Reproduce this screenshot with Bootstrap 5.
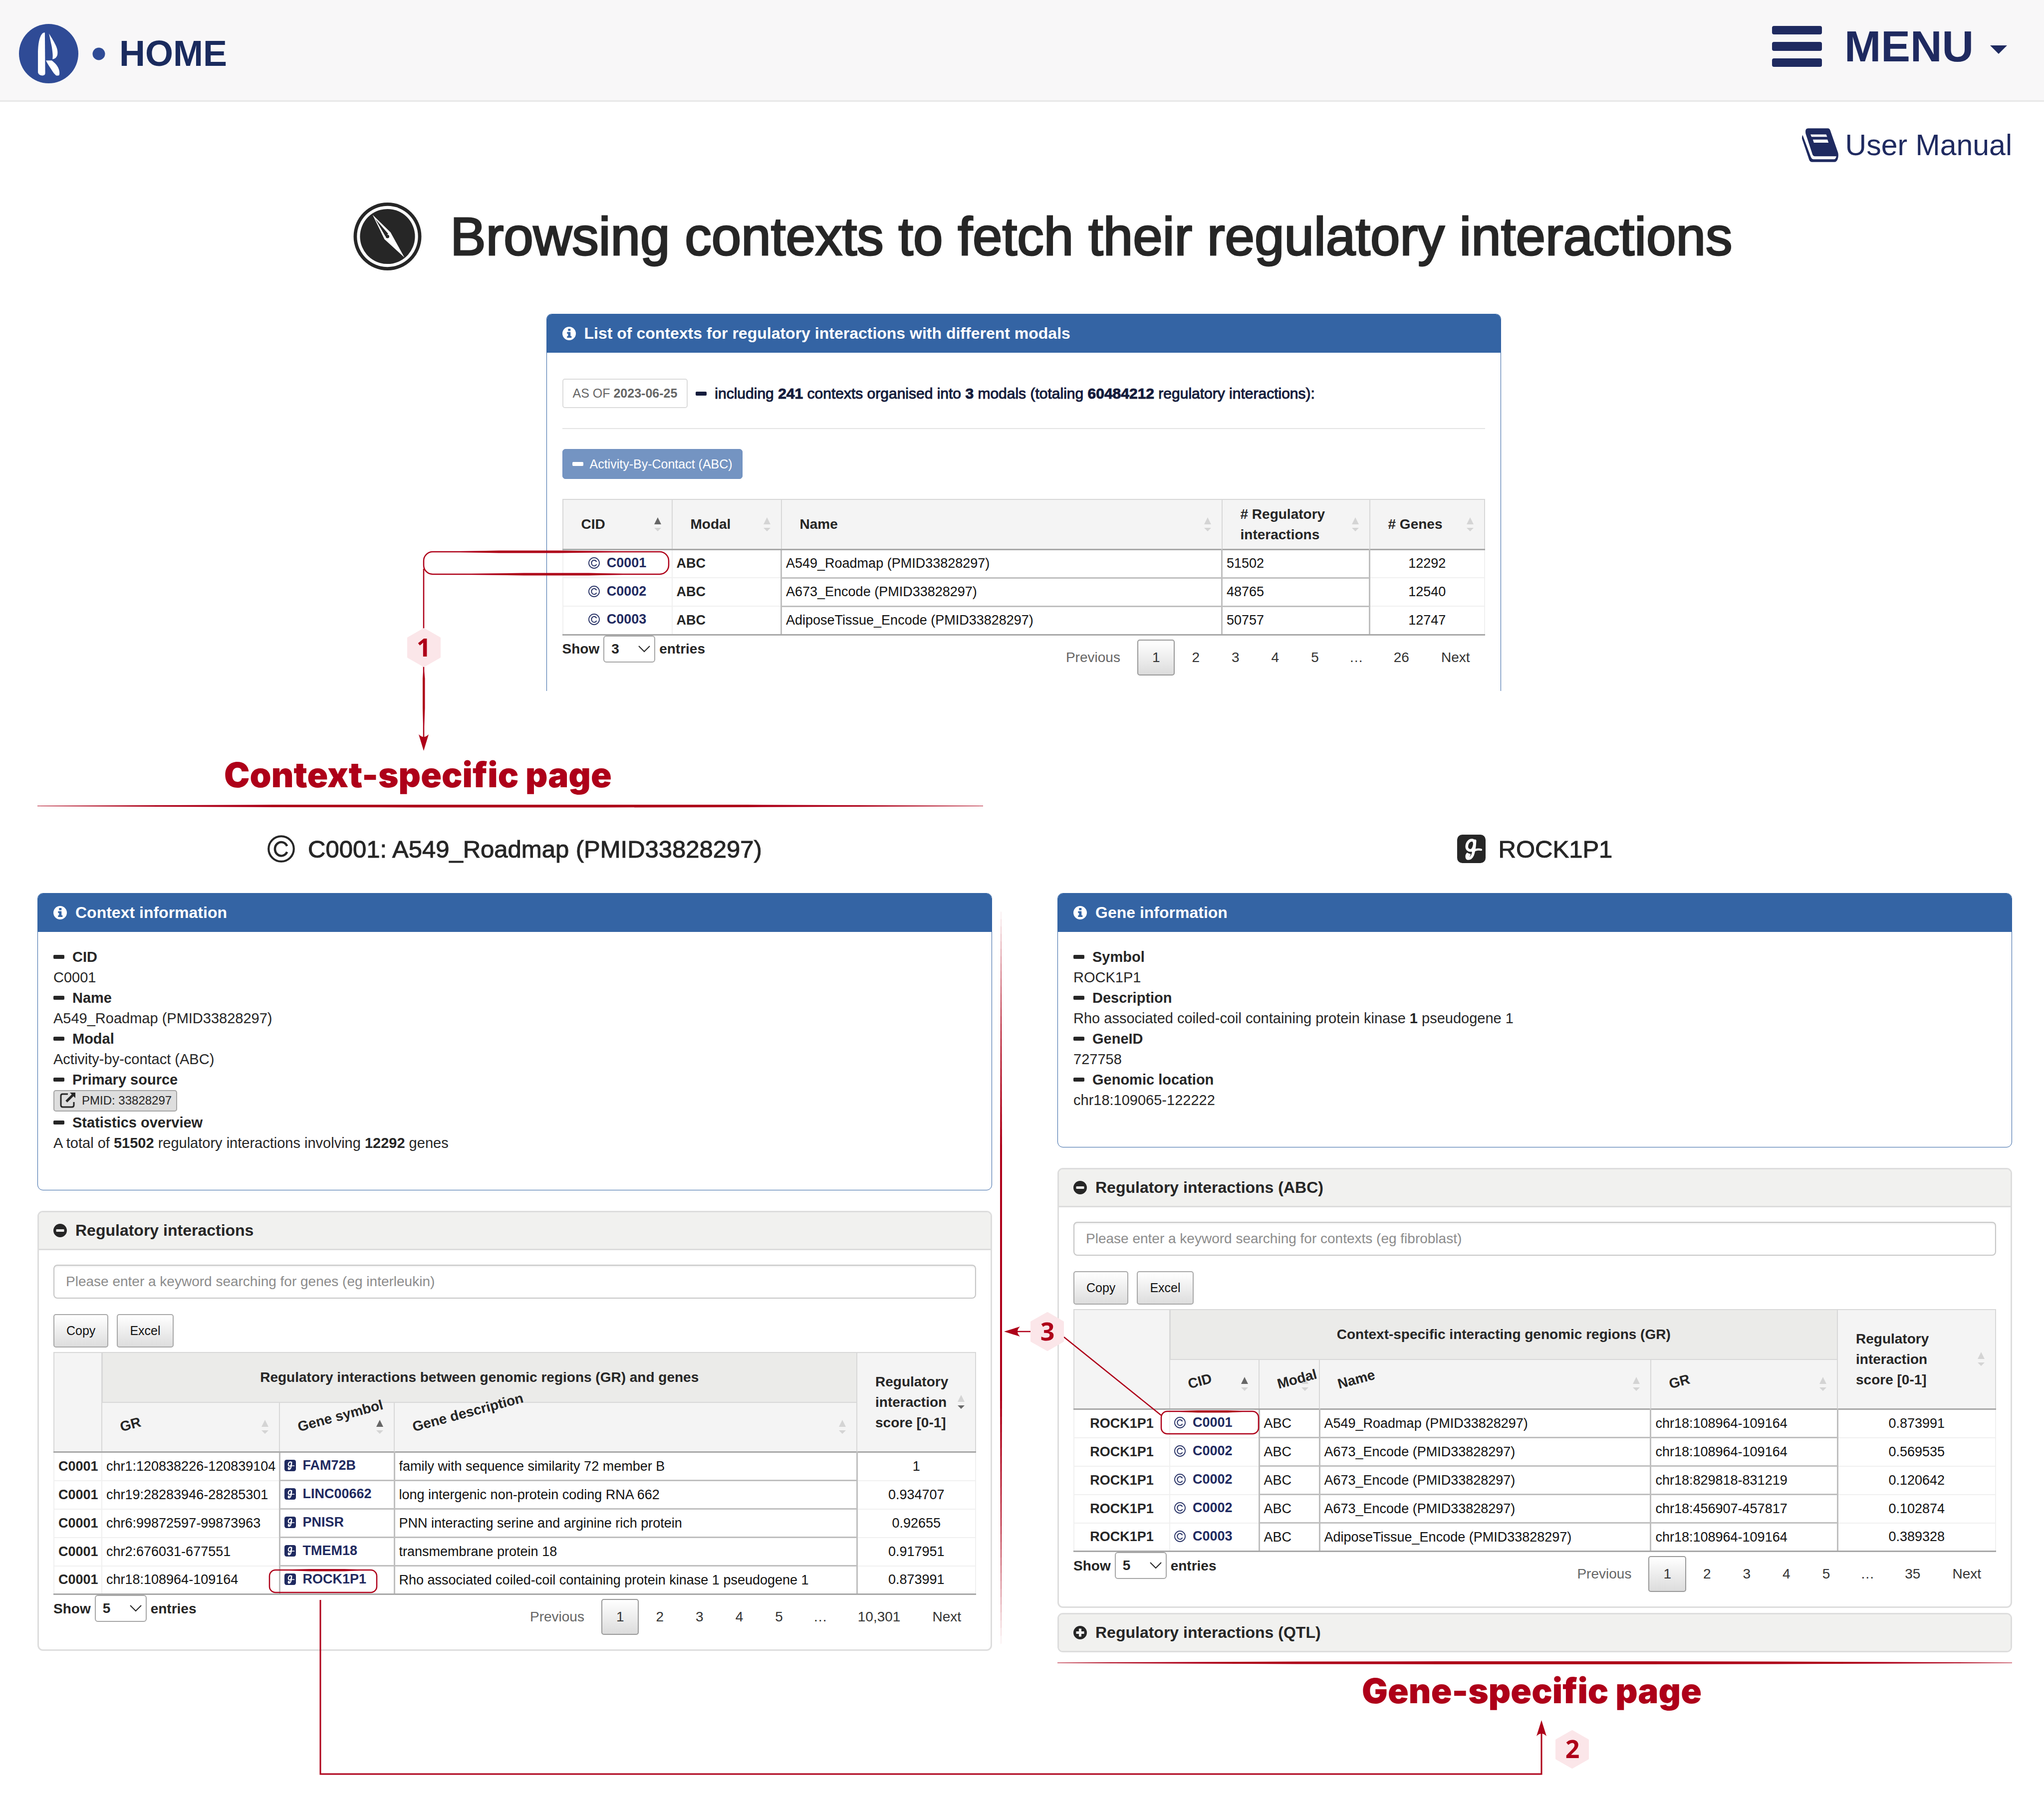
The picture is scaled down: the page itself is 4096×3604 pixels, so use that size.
<!DOCTYPE html>
<html lang="en">
<head>
<meta charset="utf-8">
<meta name="viewport" content="width=device-width, initial-scale=1">
<title>Browsing contexts to fetch their regulatory interactions</title>
<link rel="stylesheet" href="https://cdn.jsdelivr.net/npm/bootstrap@5.3.0/dist/css/bootstrap.min.css">
<style>
:root { --ink: #262626; --navy: #1f2a60; --blue: #3464a4; --red: #ae0019; --line: #d8d8d8; }
body { position: relative; min-height: 100vh; font-family: "Liberation Sans", Arial, sans-serif; font-size: 28px; line-height: 41px; color: var(--ink); background: #fff; }
a { color: var(--navy); text-decoration: none; }
svg { flex: none; }

/* top bar */
.topbar { padding: 48px 74px 34px 38px; background: #f8f7f8; border-bottom: 3px solid #e8e8e8; }
.brand { gap: 28px; font-size: 72px; line-height: 119px; font-weight: 700; color: #1a2b5e; }
.menu-btn { gap: 33px; padding: 4px 0 0; border: 0; background: none; font-size: 88px; line-height: 82px; font-weight: 700; color: var(--navy); }
.menu-btn .bars { margin-right: 12px; }
.menu-btn .caret { margin-top: 12px; }
.manual { gap: 14px; font-size: 59px; line-height: 68px; padding: 53px 64px 0 0; }

/* headings */
.page-title { gap: 57px; margin: 81px 0 87px; padding-left: 84px; font-size: 107px; line-height: 136px; -webkit-text-stroke: 3px var(--ink); }
.view-title { gap: 26px; margin: 0 0 58px; font-size: 49px; line-height: 60px; -webkit-text-stroke: 1px var(--ink); }
.area-title { margin: 0; font-family: Inter, "Liberation Sans", sans-serif; font-size: 69px; line-height: 80px; font-weight: 900; color: var(--red); }
.area-rule { height: 6px; background: var(--red); clip-path: polygon(0 40%, 25% 10%, 40% 0, 60% 0, 75% 10%, 100% 40%, 100% 60%, 75% 90%, 60% 100%, 40% 100%, 25% 90%, 0 60%); }
.first-area { width: 50%; padding: 128px 78px 53px 75px; }
.first-area .area-title { padding-left: 374px; }
.first-area .area-rule { margin-top: 20px; }
.second-area { padding-top: 18px; }
.second-area .area-title { margin-top: 13px; padding-right: 12px; }

/* panels */
.list-area { padding-left: 6px; }
.list-wrap { max-width: 1913px; margin: 0 auto; }
.views { display: grid; grid-template-columns: 1fr 1fr; gap: 131px; padding: 0 64px 169px 75px; }
.panel { border: 3px solid #dddddd; border-radius: 11px; overflow: hidden; }
.panel + .panel { margin-top: 41px; }
.panel.panel-snug { margin-top: 10px; }
.panel > .card-header { gap: 17px; padding: 0 29px; border-bottom: 3px solid #dcdcdc; border-radius: 0; background: #f1f1ef; font-size: 32px; line-height: 73px; font-weight: 700; }
.panel > .card-body { padding: 29px; }
.panel-blue { border: 1px solid var(--blue); }
.panel-blue > .card-header { padding: 0 31px; border-bottom: 0; background: var(--blue); color: #fff; line-height: 77px; }
.panel-blue > .card-body { padding: 30px 31px 31px; }
.panel-open { border-bottom: 0; border-bottom-left-radius: 0; border-bottom-right-radius: 0; }
.panel-closed > .card-header { border-bottom: 0; }

.facts { margin: 0 0 42px; font-size: 29px; }
.facts dt { display: flex; align-items: center; gap: 16px; font-weight: 700; }
.facts dd { margin: 0; }
.pmid-btn { display: flex; gap: 10px; height: 43px; margin-bottom: 2px; padding: 0 9px; border: 2px solid #a5a5a5; border-radius: 5px; background: #dedede; font-size: 24px; line-height: 38px; color: var(--ink); }

.as-of { padding: 0 19px; border: 2px solid #dcdcdc; border-radius: 5px; font-size: 25px; line-height: 55px; color: #666; }
.summary { gap: 16px; padding-top: 22px; font-size: 30px; line-height: 39px; color: #141c3c; }
.summary p { -webkit-text-stroke: 1px #141c3c; }
.soft-rule { margin: 40px 0 40px; border-top: 2px solid #e4e4e4; opacity: 1; }
.modal-btn { gap: 13px; padding: 0 19px; border: 1px solid #6b8cbd; border-radius: 6px; background: #7494c2; color: #fff; font-size: 25px; line-height: 58px; margin-bottom: 40px; }

.find-box { height: 68px; margin-bottom: 31px; padding: 0 23px; border: 2px solid #c6c6c6; border-radius: 8px; font-size: 28px; box-shadow: inset 0 2px 3px #ececec; }
.find-box::placeholder { color: #8c8c8c; opacity: 1; }
.tool-btn { height: 67px; padding: 0 24px; border: 2px solid #a8a8a8; border-radius: 5px; background: linear-gradient(#fff, #ddd); font-size: 25px; color: #111; }
.tools { gap: 17px; margin-bottom: 9px; }

/* data tables */
.data-grid { table-layout: fixed; margin: 0; color: #111; border-collapse: collapse; }
.data-grid > thead > tr > th { height: 100px; padding: 0 21px 0 36px; border: 2px solid var(--line); background: #f4f4f4; color: var(--ink); vertical-align: middle; font-size: 28px; line-height: 41px; white-space: nowrap; }
.data-grid > thead > tr > th.span-head { background: #ebebe9; text-align: center; padding: 0; border-left-width: 3px; }
.data-grid > tbody > tr > td { height: 57px; padding: 0 8px; border: 2px solid #f0f0f0; vertical-align: middle; font-size: 27px; line-height: 41px; white-space: nowrap; }
.data-grid > tbody > tr > td.boxed { border: 3px solid #bfbfbf; }
.data-grid > tbody > tr > td.mid { text-align: center; }
.data-grid > tbody > tr > td.strong { font-weight: 700; color: var(--ink); }
.data-grid > tbody > tr:first-child > td { border-top: 3px solid #a8a8a8; }
.data-grid > tbody > tr:last-child > td { border-bottom: 3px solid #a8a8a8; }
.data-grid td a { display: inline-flex; align-items: center; gap: 14px; font-weight: 700; }
.head-line { display: flex; align-items: center; justify-content: space-between; }
.head-line span { min-width: 0; }
.tilt { transform: rotate(-15deg); transform-origin: left center; }
.sort { width: 14px; height: 28px; fill: #d4d4d4; }
.sort .on { fill: #666; }
.w96 { width: 96px; } .w121 { width: 121px; } .w179 { width: 179px; } .w192 { width: 192px; } .w219 { width: 219px; }
.w230 { width: 230px; } .w238 { width: 238px; } .w296 { width: 296px; } .w317 { width: 317px; } .w356 { width: 356px; } .w374 { width: 374px; }

.length-box { gap: 8px; font-weight: 700; }
.length-box .form-select { width: 104px; height: 54px; padding: 0 0 0 14px; border: 2px solid #a6a6a6; border-radius: 6px; font-size: 28px; font-weight: 700; color: var(--ink);
  background: #fff url("data:image/svg+xml,%3Csvg xmlns='http://www.w3.org/2000/svg' viewBox='0 0 24 14'%3E%3Cpath d='M1 1l11 11L23 1' fill='none' stroke='%23262626' stroke-width='2'/%3E%3C/svg%3E") no-repeat right 8px center / 24px 14px; }
.pagination { gap: 4px; margin: 8px 0 0; }
.pagination .page-link { height: 72px; padding: 0 29px; border: 1px solid transparent; border-radius: 5px; background: none; font-size: 28px; line-height: 70px; color: #333; }
.pagination span.page-link { padding: 0 26px; }
.pagination .disabled .page-link { color: #666; }
.pagination .active .page-link { border: 2px solid #999; padding: 0 28px; line-height: 68px; background: linear-gradient(#fff, #dcdcdc); }
.pagination .page-item:not(:first-child) .page-link { margin-left: 0; }

/* walkthrough arrows over the page */
.tour { position: absolute; top: 0; left: 0; width: 100%; height: auto; pointer-events: none; }
.tour text { font: 700 50px "Noto Sans", sans-serif; fill: var(--red); text-anchor: middle; }
</style>
<script src="https://cdn.jsdelivr.net/npm/bootstrap@5.3.0/dist/js/bootstrap.bundle.min.js"></script>
</head>
<body>

<svg width="0" height="0" class="position-absolute" aria-hidden="true">
  <symbol id="i-info" viewBox="0 0 27 27"><circle cx="13.5" cy="13.5" r="13.5" fill="currentColor"/><g fill="#3464a4"><rect x="11.3" y="4" width="5" height="4.4"/><path d="M9.3 10.5h7v8.2h2v3.4H9.3v-3.4h2v-4.8h-2z"/></g></symbol>
  <symbol id="i-minus" viewBox="0 0 27 27"><circle cx="13.5" cy="13.5" r="13.5" fill="currentColor"/><rect x="5.5" y="11" width="16" height="5" rx="1" fill="#f1f1ef"/></symbol>
  <symbol id="i-plus" viewBox="0 0 27 27"><circle cx="13.5" cy="13.5" r="13.5" fill="currentColor"/><path d="M11 5.5h5V11h5.500v5H16v5.500h-5V16H5.500v-5H11z" fill="#f1f1ef"/></symbol>
  <symbol id="i-dash" viewBox="0 0 22 8"><rect width="22" height="8" rx="2" fill="currentColor"/></symbol>
  <symbol id="i-copy" viewBox="0 0 54 54"><g fill="none" stroke="currentColor"><circle cx="27" cy="27" r="24.800" stroke-width="4"/><path d="M38.500 21.500A12.500 13.500 0 1 0 38.500 33" stroke-width="4.500"/></g></symbol>
  <symbol id="i-gene" viewBox="0 0 83 83"><rect width="83" height="83" rx="15" fill="currentColor"/><g fill="none" stroke="#fff" stroke-width="8" stroke-linecap="round" stroke-linejoin="round"><path d="M51 30C50 22 50 16 43 16C34 16 28 26 28 35C28 42 33 47 40 46C46 45 50 38 52 18C51 36 49 50 45 60C41 69 36 70 32 70C27 69 27 61 30 57"/><path d="M29 57L37 58L33 65" stroke-width="5"/><path d="M45 49Q57 41 70 44" stroke-width="6"/></g></symbol>
  <symbol id="i-sort" viewBox="0 0 14 28"><path d="M7 0l7 14H0zM0 21h14l-7 7z"/></symbol>
</svg>

<nav class="navbar topbar align-items-start">
  <a class="brand d-flex align-items-center" href="#">
    <svg width="119" height="119" viewBox="0 0 172 172" aria-hidden="true"><circle cx="86" cy="86" r="86" fill="#2f4b96"/><g fill="#fff"><path d="M75 25C65 24 56 42 55 80V140C56 147 62 149.500 68 149.500C73 149 76 147 76 143z"/><path d="M87 28C93 38 98 45 104 57C110 68 113 78 111.500 88C110 97 104 101 97 102C99 92 97 80 95 66z"/><path d="M78 106H95C104 113 111 120 115 130C118 138 118 146 116 149C112 150 109 150 107 149C104 146 100 142 97 137C90 126 84 118 78 106z"/></g></svg>
    <svg width="26" height="26" viewBox="0 0 26 26" aria-hidden="true"><circle cx="13" cy="13" r="12.500" fill="#2f4b96"/></svg>
    <span>HOME</span>
  </a>
  <button class="menu-btn d-flex" type="button">
    <svg class="bars" width="100" height="82" viewBox="0 0 100 82" fill="currentColor" aria-hidden="true"><rect width="100" height="17" rx="4"/><rect y="32" width="100" height="18" rx="4"/><rect y="65" width="100" height="17" rx="4"/></svg>
    <span>MENU</span>
    <svg class="caret align-self-center" width="34" height="17" viewBox="0 0 34 17" aria-hidden="true"><path d="M0 0h34L17 17z" fill="currentColor"/></svg>
  </button>
</nav>

<div class="d-flex justify-content-end">
  <a class="manual d-flex" href="#">
    <svg width="73" height="68" viewBox="0 0 107 99" aria-hidden="true"><path d="M18 0H76Q81 0 83 6L106 72Q108 82 105 90Q102 99 95 99H30Q23 99 21 92L0 30Q0 22 2 20L26 84Q29 91 34 91H94Q99 91 101 82H38Q33 82 31 77L11 16Q8 0 18 0z" fill="currentColor"/><path d="M25 18H71L74 25H28zM32 33H75L78 42H35z" fill="#fff"/></svg>
    <span>User Manual</span>
  </a>
</div>

<h1 class="page-title d-flex justify-content-center">
  <svg width="137" height="136" viewBox="0 0 100 100" aria-hidden="true"><circle cx="50" cy="50" r="50" fill="#262626"/><circle cx="50" cy="50" r="45" fill="#fff"/><circle cx="50" cy="50" r="40.500" fill="#262626"/><path d="M28 18L54.500 44L75 81L45.500 54z" fill="#fff"/><path d="M32 24L51 46L47 50z" fill="#262626"/><circle cx="50" cy="50" r="2.600" fill="#262626"/></svg>
  <span>Browsing contexts to fetch their regulatory interactions</span>
</h1>

<section class="list-area">
  <div class="card panel panel-blue panel-open list-wrap">
    <div class="card-header d-flex align-items-center"><svg width="27" height="27"><use href="#i-info"/></svg><span>List of contexts for regulatory interactions with different modals</span></div>
    <div class="card-body">
      <div class="summary d-flex align-items-center">
        <span class="as-of">AS OF <b>2023-06-25</b></span>
        <svg width="22" height="8"><use href="#i-dash"/></svg>
        <p class="m-0">including <b>241</b> contexts organised into <b>3</b> modals (totaling <b>60484212</b> regulatory interactions):</p>
      </div>
      <hr class="soft-rule">
      <button class="modal-btn d-flex align-items-center" type="button"><svg width="22" height="8"><use href="#i-dash"/></svg><span>Activity-By-Contact (ABC)</span></button>
      <table class="table data-grid">
        <colgroup><col class="w219"><col class="w219"><col><col class="w296"><col class="w230"></colgroup>
        <thead>
          <tr>
            <th scope="col"><div class="head-line"><span>CID</span><svg class="sort" viewBox="0 0 14 28"><path class="on" d="M7 0l7 14H0z"/><path d="M0 21h14l-7 7z"/></svg></div></th>
            <th scope="col"><div class="head-line"><span>Modal</span><svg class="sort"><use href="#i-sort"/></svg></div></th>
            <th scope="col"><div class="head-line"><span>Name</span><svg class="sort"><use href="#i-sort"/></svg></div></th>
            <th scope="col"><div class="head-line"><span># Regulatory<br>interactions</span><svg class="sort"><use href="#i-sort"/></svg></div></th>
            <th scope="col"><div class="head-line"><span># Genes</span><svg class="sort"><use href="#i-sort"/></svg></div></th>
          </tr>
        </thead>
        <tbody>
          <tr><td class="mid"><a href="#"><svg width="23" height="23"><use href="#i-copy"/></svg>C0001</a></td><td class="strong">ABC</td><td class="boxed">A549_Roadmap (PMID33828297)</td><td class="boxed">51502</td><td class="mid">12292</td></tr>
          <tr><td class="mid"><a href="#"><svg width="23" height="23"><use href="#i-copy"/></svg>C0002</a></td><td class="strong">ABC</td><td class="boxed">A673_Encode (PMID33828297)</td><td class="boxed">48765</td><td class="mid">12540</td></tr>
          <tr><td class="mid"><a href="#"><svg width="23" height="23"><use href="#i-copy"/></svg>C0003</a></td><td class="strong">ABC</td><td class="boxed">AdiposeTissue_Encode (PMID33828297)</td><td class="boxed">50757</td><td class="mid">12747</td></tr>
        </tbody>
      </table>
      <div class="d-flex justify-content-between align-items-start">
        <div class="length-box d-flex align-items-center"><label for="len1">Show</label><select class="form-select" id="len1"><option>3</option></select><span>entries</span></div>
        <ul class="pagination">
          <li class="page-item disabled"><a class="page-link" href="#">Previous</a></li>
          <li class="page-item active"><a class="page-link" href="#">1</a></li>
          <li class="page-item"><a class="page-link" href="#">2</a></li>
          <li class="page-item"><a class="page-link" href="#">3</a></li>
          <li class="page-item"><a class="page-link" href="#">4</a></li>
          <li class="page-item"><a class="page-link" href="#">5</a></li>
          <li class="page-item"><span class="page-link">…</span></li>
          <li class="page-item"><a class="page-link" href="#">26</a></li>
          <li class="page-item"><a class="page-link" href="#">Next</a></li>
        </ul>
      </div>
    </div>
  </div>
</section>

<div class="first-area">
  <h2 class="area-title">Context-specific page</h2>
  <div class="area-rule"></div>
</div>

<main class="views">
  <section>
    <h3 class="view-title d-flex justify-content-center align-items-center"><svg width="55" height="55"><use href="#i-copy"/></svg><span>C0001: A549_Roadmap (PMID33828297)</span></h3>

    <div class="card panel panel-blue">
      <div class="card-header d-flex align-items-center"><svg width="27" height="27"><use href="#i-info"/></svg><span>Context information</span></div>
      <div class="card-body">
        <dl class="facts">
          <dt><svg width="22" height="8"><use href="#i-dash"/></svg>CID</dt><dd>C0001</dd>
          <dt><svg width="22" height="8"><use href="#i-dash"/></svg>Name</dt><dd>A549_Roadmap (PMID33828297)</dd>
          <dt><svg width="22" height="8"><use href="#i-dash"/></svg>Modal</dt><dd>Activity-by-contact (ABC)</dd>
          <dt><svg width="22" height="8"><use href="#i-dash"/></svg>Primary source</dt>
          <dd><button class="pmid-btn" type="button"><svg width="36" height="36" viewBox="0 0 36 36" fill="none" stroke="#262626" stroke-width="3"><path d="M18 6H7.500Q4 6 4 9.500V28Q4 32 8 32H26Q30 32 30 28V22"/><path d="M22 3h11v11z" fill="#262626" stroke="none"/><path d="M15 21L29 7" stroke-width="5"/></svg><span>PMID: 33828297</span></button></dd>
          <dt><svg width="22" height="8"><use href="#i-dash"/></svg>Statistics overview</dt><dd>A total of <b>51502</b> regulatory interactions involving <b>12292</b> genes</dd>
        </dl>
      </div>
    </div>

    <div class="card panel">
      <div class="card-header d-flex align-items-center"><svg width="27" height="27"><use href="#i-minus"/></svg><span>Regulatory interactions</span></div>
      <div class="card-body">
        <input class="form-control find-box" type="text" aria-label="Search genes" placeholder="Please enter a keyword searching for genes (eg interleukin)">
        <div class="tools d-flex"><button class="tool-btn" type="button">Copy</button><button class="tool-btn" type="button">Excel</button></div>
        <table class="table data-grid">
          <colgroup><col class="w96"><col class="w356"><col class="w230"><col><col class="w238"></colgroup>
          <thead>
            <tr>
              <th rowspan="2"></th>
              <th class="span-head" colspan="3" scope="colgroup">Regulatory interactions between genomic regions (GR) and genes</th>
              <th rowspan="2" scope="col"><div class="head-line"><span>Regulatory<br>interaction<br>score [0-1]</span><svg class="sort" viewBox="0 0 14 28"><path d="M7 0l7 14H0z"/><path class="on" d="M0 21h14l-7 7z"/></svg></div></th>
            </tr>
            <tr>
              <th scope="col"><div class="head-line"><span class="tilt">GR</span><svg class="sort"><use href="#i-sort"/></svg></div></th>
              <th scope="col"><div class="head-line"><span class="tilt">Gene symbol</span><svg class="sort" viewBox="0 0 14 28"><path class="on" d="M7 0l7 14H0z"/><path d="M0 21h14l-7 7z"/></svg></div></th>
              <th scope="col"><div class="head-line"><span class="tilt">Gene description</span><svg class="sort"><use href="#i-sort"/></svg></div></th>
            </tr>
          </thead>
          <tbody>
            <tr><td class="strong">C0001</td><td>chr1:120838226-120839104</td><td class="boxed"><a href="#"><svg width="23" height="23"><use href="#i-gene"/></svg>FAM72B</a></td><td class="boxed">family with sequence similarity 72 member B</td><td class="mid">1</td></tr>
            <tr><td class="strong">C0001</td><td>chr19:28283946-28285301</td><td class="boxed"><a href="#"><svg width="23" height="23"><use href="#i-gene"/></svg>LINC00662</a></td><td class="boxed">long intergenic non-protein coding RNA 662</td><td class="mid">0.934707</td></tr>
            <tr><td class="strong">C0001</td><td>chr6:99872597-99873963</td><td class="boxed"><a href="#"><svg width="23" height="23"><use href="#i-gene"/></svg>PNISR</a></td><td class="boxed">PNN interacting serine and arginine rich protein</td><td class="mid">0.92655</td></tr>
            <tr><td class="strong">C0001</td><td>chr2:676031-677551</td><td class="boxed"><a href="#"><svg width="23" height="23"><use href="#i-gene"/></svg>TMEM18</a></td><td class="boxed">transmembrane protein 18</td><td class="mid">0.917951</td></tr>
            <tr><td class="strong">C0001</td><td>chr18:108964-109164</td><td class="boxed"><a href="#"><svg width="23" height="23"><use href="#i-gene"/></svg>ROCK1P1</a></td><td class="boxed">Rho associated coiled-coil containing protein kinase 1 pseudogene 1</td><td class="mid">0.873991</td></tr>
          </tbody>
        </table>
        <div class="d-flex justify-content-between align-items-start">
          <div class="length-box d-flex align-items-center"><label for="len2">Show</label><select class="form-select" id="len2"><option>5</option></select><span>entries</span></div>
          <ul class="pagination">
            <li class="page-item disabled"><a class="page-link" href="#">Previous</a></li>
            <li class="page-item active"><a class="page-link" href="#">1</a></li>
            <li class="page-item"><a class="page-link" href="#">2</a></li>
            <li class="page-item"><a class="page-link" href="#">3</a></li>
            <li class="page-item"><a class="page-link" href="#">4</a></li>
            <li class="page-item"><a class="page-link" href="#">5</a></li>
            <li class="page-item"><span class="page-link">…</span></li>
            <li class="page-item"><a class="page-link" href="#">10,301</a></li>
            <li class="page-item"><a class="page-link" href="#">Next</a></li>
          </ul>
        </div>
      </div>
    </div>
  </section>

  <section>
    <h3 class="view-title d-flex justify-content-center align-items-center"><svg width="57" height="57"><use href="#i-gene"/></svg><span>ROCK1P1</span></h3>

    <div class="card panel panel-blue">
      <div class="card-header d-flex align-items-center"><svg width="27" height="27"><use href="#i-info"/></svg><span>Gene information</span></div>
      <div class="card-body">
        <dl class="facts">
          <dt><svg width="22" height="8"><use href="#i-dash"/></svg>Symbol</dt><dd>ROCK1P1</dd>
          <dt><svg width="22" height="8"><use href="#i-dash"/></svg>Description</dt><dd>Rho associated coiled-coil containing protein kinase <b>1</b> pseudogene 1</dd>
          <dt><svg width="22" height="8"><use href="#i-dash"/></svg>GeneID</dt><dd>727758</dd>
          <dt><svg width="22" height="8"><use href="#i-dash"/></svg>Genomic location</dt><dd>chr18:109065-122222</dd>
        </dl>
      </div>
    </div>

    <div class="card panel">
      <div class="card-header d-flex align-items-center"><svg width="27" height="27"><use href="#i-minus"/></svg><span>Regulatory interactions (ABC)</span></div>
      <div class="card-body">
        <input class="form-control find-box" type="text" aria-label="Search contexts" placeholder="Please enter a keyword searching for contexts (eg fibroblast)">
        <div class="tools d-flex"><button class="tool-btn" type="button">Copy</button><button class="tool-btn" type="button">Excel</button></div>
        <table class="table data-grid">
          <colgroup><col class="w192"><col class="w179"><col class="w121"><col><col class="w374"><col class="w317"></colgroup>
          <thead>
            <tr>
              <th rowspan="2"></th>
              <th class="span-head" colspan="4" scope="colgroup">Context-specific interacting genomic regions (GR)</th>
              <th rowspan="2" scope="col"><div class="head-line"><span>Regulatory<br>interaction<br>score [0-1]</span><svg class="sort"><use href="#i-sort"/></svg></div></th>
            </tr>
            <tr>
              <th scope="col"><div class="head-line"><span class="tilt">CID</span><svg class="sort" viewBox="0 0 14 28"><path class="on" d="M7 0l7 14H0z"/><path d="M0 21h14l-7 7z"/></svg></div></th>
              <th scope="col"><div class="head-line"><span class="tilt">Modal</span><svg class="sort"><use href="#i-sort"/></svg></div></th>
              <th scope="col"><div class="head-line"><span class="tilt">Name</span><svg class="sort"><use href="#i-sort"/></svg></div></th>
              <th scope="col"><div class="head-line"><span class="tilt">GR</span><svg class="sort"><use href="#i-sort"/></svg></div></th>
            </tr>
          </thead>
          <tbody>
            <tr><td class="strong mid">ROCK1P1</td><td><a href="#"><svg width="23" height="23"><use href="#i-copy"/></svg>C0001</a></td><td class="boxed">ABC</td><td class="boxed">A549_Roadmap (PMID33828297)</td><td class="boxed">chr18:108964-109164</td><td class="mid">0.873991</td></tr>
            <tr><td class="strong mid">ROCK1P1</td><td><a href="#"><svg width="23" height="23"><use href="#i-copy"/></svg>C0002</a></td><td class="boxed">ABC</td><td class="boxed">A673_Encode (PMID33828297)</td><td class="boxed">chr18:108964-109164</td><td class="mid">0.569535</td></tr>
            <tr><td class="strong mid">ROCK1P1</td><td><a href="#"><svg width="23" height="23"><use href="#i-copy"/></svg>C0002</a></td><td class="boxed">ABC</td><td class="boxed">A673_Encode (PMID33828297)</td><td class="boxed">chr18:829818-831219</td><td class="mid">0.120642</td></tr>
            <tr><td class="strong mid">ROCK1P1</td><td><a href="#"><svg width="23" height="23"><use href="#i-copy"/></svg>C0002</a></td><td class="boxed">ABC</td><td class="boxed">A673_Encode (PMID33828297)</td><td class="boxed">chr18:456907-457817</td><td class="mid">0.102874</td></tr>
            <tr><td class="strong mid">ROCK1P1</td><td><a href="#"><svg width="23" height="23"><use href="#i-copy"/></svg>C0003</a></td><td class="boxed">ABC</td><td class="boxed">AdiposeTissue_Encode (PMID33828297)</td><td class="boxed">chr18:108964-109164</td><td class="mid">0.389328</td></tr>
          </tbody>
        </table>
        <div class="d-flex justify-content-between align-items-start">
          <div class="length-box d-flex align-items-center"><label for="len3">Show</label><select class="form-select" id="len3"><option>5</option></select><span>entries</span></div>
          <ul class="pagination">
            <li class="page-item disabled"><a class="page-link" href="#">Previous</a></li>
            <li class="page-item active"><a class="page-link" href="#">1</a></li>
            <li class="page-item"><a class="page-link" href="#">2</a></li>
            <li class="page-item"><a class="page-link" href="#">3</a></li>
            <li class="page-item"><a class="page-link" href="#">4</a></li>
            <li class="page-item"><a class="page-link" href="#">5</a></li>
            <li class="page-item"><span class="page-link">…</span></li>
            <li class="page-item"><a class="page-link" href="#">35</a></li>
            <li class="page-item"><a class="page-link" href="#">Next</a></li>
          </ul>
        </div>
      </div>
    </div>

    <div class="card panel panel-snug panel-closed">
      <div class="card-header d-flex align-items-center"><svg width="27" height="27"><use href="#i-plus"/></svg><span>Regulatory interactions (QTL)</span></div>
    </div>

    <div class="second-area text-center">
      <div class="area-rule"></div>
      <h2 class="area-title">Gene-specific page</h2>
    </div>
  </section>
</main>

<svg class="tour" viewBox="0 0 4096 3604" role="img" aria-label="Walkthrough steps">
  <g fill="none" stroke="#ae0019" stroke-width="2.500">
    <rect x="849" y="1106" width="491" height="45" rx="18"/>
    <rect x="540" y="3147" width="215" height="45" rx="12"/>
    <rect x="2327" y="2829" width="195" height="45" rx="12"/>
    <path d="M849 1140V1262M849 1335V1480M2132 2680L2327 2837M2065 2669H2035" />
    <path d="M642 3207V3556H3089V3470" stroke-width="3"/>
  </g>
  <g fill="#ae0019">
    <path d="M870 1106L1000 1103.500H1120L1300 1106L1120 1108.500H1000zM870 1151L1050 1148.500H1180L1300 1151L1180 1153.500H1050z"/>
    <path d="M552 3147L620 3145H690L742 3147L690 3149.500H620zM2340 2829L2400 2827H2460L2510 2829L2460 2831.500H2400z"/>
    <path d="M849 1335L851.500 1360V1420L849 1480L847 1420V1360z"/>
    <path d="M849 1505L839 1472Q849 1482 859 1472z"/>
    <path d="M3089 3448L3079 3480Q3089 3470 3099 3480z"/>
    <path d="M2012 2669L2044 2659Q2034 2669 2044 2679z"/>
    <path d="M2006 1820L2008 2300V2800L2006 3303L2004 2800V2300z"/>
  </g>
  <g fill="#fbe6e9" stroke="#fbe6e9" stroke-width="4" stroke-linejoin="round">
    <path d="M849.500 1261L881 1279V1317L849.500 1335L818 1317V1279z"/>
    <path d="M3150.500 3470L3182 3488V3525L3150.500 3543L3119 3525V3488z"/>
    <path d="M2099 2632L2130 2650V2688L2099 2706L2067 2688V2650z"/>
  </g>
  <text x="849" y="1316">1</text>
  <text x="3151" y="3524">2</text>
  <text x="2099" y="2687">3</text>
</svg>
</body>
</html>
